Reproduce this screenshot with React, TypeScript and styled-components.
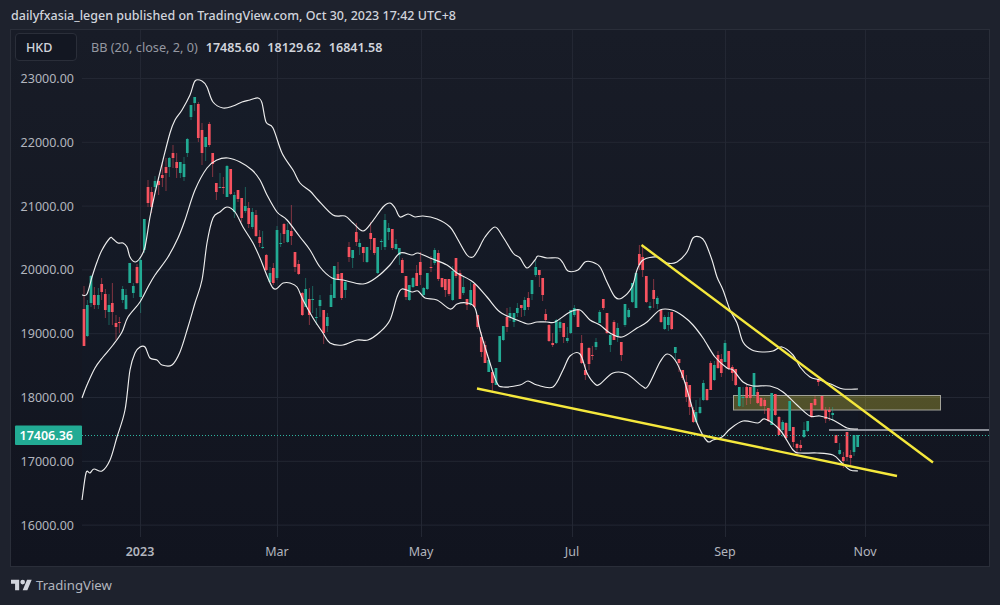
import styled, { createGlobalStyle } from 'styled-components';

const GlobalStyle = createGlobalStyle`
  html, body {
    margin: 0;
    background: #1e222d;
  }
  body {
    font-family: "Noto Sans", "Open Sans", sans-serif;
  }
`;

const Page = styled.div`
  width: 1000px;
  height: 605px;
  display: flex;
  flex-direction: column;
  padding: 0 10px;
  box-sizing: border-box;
  background: #1e222d;
  overflow: hidden;
`;

const Header = styled.div`
  height: 29px;
  flex: none;
  display: flex;
  align-items: center;
  padding: 2px 1px 0;
  box-sizing: border-box;
  font-size: 12.5px;
  font-weight: 500;
  color: #d1d4dc;
  white-space: nowrap;
`;

const ChartPanel = styled.div`
  position: relative;
  flex: none;
  height: 538px;
  box-sizing: border-box;
  border: 1px solid #2a2e39;
  background: linear-gradient(#181c27, #11141f);
`;

const ChartSvg = styled.svg`
  display: block;
`;

const Legend = styled.div`
  position: absolute;
  top: 3px;
  left: 4px;
  display: flex;
  align-items: center;
  gap: 14px;
`;

const SymbolBox = styled.div`
  width: 62px;
  height: 28px;
  box-sizing: border-box;
  display: flex;
  align-items: center;
  padding-left: 10px;
  border: 1px solid #2a2e39;
  border-radius: 4px;
  background: #131722;
  font-size: 12.5px;
  font-weight: 500;
  color: #d1d4dc;
`;

const Study = styled.div`
  display: flex;
  align-items: center;
  gap: 8px;
  font-size: 12.7px;
  color: #9598a1;
`;

const StudyValue = styled.span`
  font-size: 12.5px;
  font-weight: 600;
  color: #d1d4dc;
`;

const Footer = styled.div`
  flex: 1;
  display: flex;
  align-items: center;
  gap: 4px;
  padding: 0 1px 2px;
  font-size: 13.2px;
  color: #b2b5be;
`;

const Logo = styled.svg`
  width: 21px;
  height: 12px;
  fill: #d1d4dc;
`;

const PriceText = styled.text`
  font-size: 12.5px;
  fill: #b2b5be;
  text-anchor: end;
`;

const LastPriceText = styled.text`
  font-size: 12.5px;
  font-weight: 600;
  fill: #ffffff;
  text-anchor: end;
`;

const TimeText = styled.text<{ $bold?: boolean }>`
  font-size: 12.5px;
  font-weight: ${(p) => (p.$bold ? 600 : 400)};
  fill: #b2b5be;
  text-anchor: middle;
`;

type Point = [number, number];
// x, body top, body bottom, wick top, wick bottom, 1 = up candle
type Candle = [number, number, number, number, number, number];

const UP = '#22ab94';
const DOWN = '#f7525f';
const WEDGE = '#f5e83c';
const GRID = '#232733';
const BAND = '#eeeeee';

const upperBand: Point[] = [
  [82, 295], [87, 294], [92, 277], [97, 262], [102, 250], [110, 238], [113, 239], [118, 243], [123, 243], [127, 247],
  [130, 257], [135, 262], [140, 258], [145, 247], [150, 217], [155, 193], [163, 160], [170, 133], [175, 120], [182, 110],
  [190, 95], [195, 81], [202, 81], [207, 87], [213, 102], [223, 108], [233, 106], [242, 102], [250, 100], [258, 98],
  [262, 103], [266, 122], [273, 128], [282, 153], [293, 170], [300, 183], [310, 191], [318, 200], [333, 215], [345, 216],
  [353, 223], [363, 231], [372, 222], [383, 207], [390, 203], [395, 208], [400, 217], [408, 214], [415, 217], [423, 216],
  [437, 219], [450, 227], [457, 238], [467, 255], [473, 257], [478, 250], [485, 237], [495, 227], [503, 237], [513, 253],
  [520, 258], [527, 268], [535, 260], [538, 256], [547, 258], [558, 258], [563, 263], [568, 271], [578, 270], [585, 262],
  [592, 262], [600, 267], [607, 282], [615, 297], [622, 298], [632, 287], [637, 270], [643, 260], [657, 257], [667, 263],
  [677, 262], [687, 252], [693, 238], [700, 237], [705, 242], [712, 260], [717, 277], [723, 290], [730, 310], [737, 323],
  [743, 342], [752, 350], [763, 352], [773, 351], [782, 347], [793, 355], [800, 367], [810, 377], [820, 380], [833, 385],
  [843, 389], [858, 389],
];

const middleBand: Point[] = [
  [82, 398], [87, 385], [95, 368], [103, 357], [113, 345], [122, 332], [128, 317], [140, 302], [148, 287], [155, 275],
  [168, 257], [178, 238], [185, 220], [195, 190], [207, 168], [217, 160], [228, 158], [240, 162], [252, 170], [260, 180],
  [267, 195], [277, 212], [287, 220], [300, 237], [310, 250], [320, 267], [332, 278], [343, 280], [363, 284], [377, 277],
  [390, 265], [400, 253], [412, 255], [418, 253], [430, 258], [447, 265], [457, 273], [473, 282], [487, 297], [500, 312],
  [517, 320], [528, 324], [537, 322], [547, 322], [555, 322], [570, 312], [580, 310], [590, 320], [600, 325], [610, 333],
  [622, 337], [637, 328], [647, 322], [660, 310], [672, 310], [683, 316], [693, 325], [703, 338], [715, 357], [727, 368],
  [733, 370], [743, 382], [753, 386], [770, 386], [783, 392], [797, 405], [810, 416], [820, 416], [833, 420], [847, 428],
  [858, 429],
];

const lowerBand: Point[] = [
  [82, 500], [86, 473], [90, 473], [94, 469], [102, 471], [110, 460], [117, 437], [125, 410], [130, 370], [135, 353],
  [140, 347], [145, 347], [150, 358], [157, 360], [162, 365], [172, 365], [180, 352], [188, 327], [195, 303], [202, 280],
  [207, 243], [213, 218], [220, 212], [227, 207], [235, 212], [243, 227], [253, 243], [260, 258], [273, 288], [283, 283],
  [290, 283], [297, 287], [303, 300], [313, 318], [323, 333], [330, 343], [343, 345], [357, 340], [368, 340], [380, 332],
  [390, 320], [397, 297], [402, 289], [412, 292], [418, 291], [425, 298], [437, 300], [450, 309], [457, 304], [467, 303],
  [475, 308], [480, 330], [490, 363], [497, 383], [503, 387], [520, 385], [528, 381], [537, 385], [553, 387], [563, 370],
  [570, 356], [580, 354], [587, 373], [595, 384], [600, 384], [613, 373], [627, 374], [642, 386], [648, 386], [660, 362],
  [667, 354], [675, 360], [683, 377], [690, 400], [697, 423], [707, 441], [713, 440], [722, 437], [730, 429], [743, 421],
  [758, 423], [765, 419], [780, 430], [793, 450], [800, 453], [817, 453], [833, 455], [842, 463], [850, 470], [858, 471],
];

const candles: Candle[] = [
  [84, 309, 346, 286, 346, 0], [87.3, 305, 336, 300, 337, 1], [91, 276, 303, 275, 307, 1], [94.3, 295, 305, 287, 309, 0],
  [98.3, 295, 305, 288, 309, 1], [101.7, 284, 292, 278, 300, 0], [105.3, 294, 310, 289, 318, 0], [109, 305, 312, 294, 325, 1],
  [112.3, 303, 312, 283, 325, 0], [116, 323, 327, 315, 340, 0], [119.3, 322, 323, 317, 333, 0], [122.7, 289, 300, 286, 303, 1],
  [126, 295, 309, 289, 310, 1], [129.7, 263, 283, 263, 283, 1], [133.3, 286, 293, 283, 298, 1], [137, 267, 283, 264, 284, 0],
  [140.7, 260, 297, 258, 313, 1], [144.3, 219, 250, 219, 253, 1], [148, 187, 203, 180, 207, 0], [151.7, 192, 207, 187, 213, 0],
  [155, 181, 187, 176, 192, 1], [158.7, 181, 185, 177, 195, 0], [162.3, 175, 178, 162, 187, 0], [166, 167, 173, 158, 191, 0],
  [169.3, 158, 167, 157, 177, 1], [173, 153, 158, 145, 168, 0], [176.7, 162, 168, 153, 178, 0], [180.3, 162, 173, 162, 178, 1],
  [184, 164, 177, 157, 181, 1], [187.3, 139, 153, 138, 157, 1], [191, 105, 117, 105, 120, 1], [194.7, 97, 103, 97, 111, 1],
  [198.3, 104, 138, 102, 142, 0], [202, 130, 153, 123, 165, 0], [205.7, 137, 147, 137, 161, 1], [209.3, 124, 145, 122, 147, 0],
  [212.7, 153, 164, 153, 177, 0], [216.3, 183, 192, 183, 200, 0], [220, 187, 188, 173, 188, 1], [223.3, 187, 188, 177, 194, 0],
  [227, 166, 197, 165, 197, 1], [230.7, 169, 194, 169, 195, 0], [234.3, 195, 212, 192, 218, 1], [238, 190, 199, 190, 202, 0],
  [241.7, 198, 218, 198, 222, 0], [245.3, 206, 211, 187, 213, 1], [248.7, 208, 224, 202, 228, 0], [252.3, 212, 227, 208, 229, 1],
  [256, 215, 236, 210, 237, 0], [259.7, 237, 243, 230, 247, 0], [262.7, 247, 248, 231, 249, 1], [266.3, 255, 270, 254, 271, 0],
  [270, 273, 282, 267, 282, 1], [273.3, 268, 283, 263, 285, 0], [277, 230, 278, 226, 280, 1], [280.7, 243, 244, 233, 247, 1],
  [284, 224, 234, 223, 243, 0], [287.7, 230, 242, 223, 243, 1], [291.3, 231, 236, 205, 245, 0], [295, 252, 267, 252, 272, 0],
  [298.7, 264, 274, 260, 275, 0], [302.3, 293, 315, 292, 316, 0], [305.7, 289, 307, 278, 307, 1], [309.3, 299, 315, 288, 325, 0],
  [312.7, 299, 300, 286, 313, 1], [316.3, 317, 318, 308, 325, 1], [320, 300, 306, 295, 317, 1], [323.7, 310, 333, 310, 344, 0],
  [327.3, 317, 326, 313, 332, 1], [331, 295, 307, 284, 307, 1], [334.3, 266, 298, 266, 298, 1], [338, 274, 279, 262, 280, 0],
  [341.7, 273, 298, 273, 300, 0], [345.3, 282, 290, 280, 298, 1], [349, 247, 257, 242, 262, 0], [352.7, 250, 258, 250, 268, 1],
  [356.3, 232, 242, 223, 246, 0], [359.7, 243, 247, 239, 255, 1], [363.3, 247, 253, 247, 262, 0], [367, 247, 262, 247, 263, 1],
  [370.7, 233, 239, 222, 250, 0], [374.3, 238, 253, 238, 255, 0], [377.7, 247, 273, 247, 274, 1], [381.3, 241, 242, 239, 250, 1],
  [385, 220, 247, 214, 250, 1], [388.7, 228, 232, 223, 240, 1], [392.3, 229, 248, 229, 250, 0], [396, 244, 249, 239, 250, 1],
  [399.3, 248, 255, 248, 265, 1], [402.3, 260, 273, 258, 273, 0], [406, 276, 297, 276, 300, 0], [409.3, 285, 300, 285, 301, 1],
  [413, 278, 287, 277, 288, 1], [416.7, 273, 286, 265, 286, 0], [420.3, 262, 275, 252, 285, 0], [423.7, 288, 295, 287, 297, 1],
  [427.3, 273, 289, 273, 290, 1], [431, 267, 268, 256, 272, 0], [434.7, 250, 263, 248, 265, 1], [438.3, 253, 279, 250, 281, 0],
  [442, 278, 287, 278, 288, 0], [445.3, 279, 290, 279, 297, 0], [449, 279, 294, 279, 296, 0], [452.7, 271, 300, 266, 301, 1],
  [456, 258, 276, 258, 278, 0], [460, 273, 299, 270, 299, 0], [463.3, 287, 293, 277, 295, 1], [467, 299, 305, 299, 310, 0],
  [470.7, 290, 305, 282, 306, 1], [474.3, 284, 307, 284, 308, 0], [477.7, 315, 327, 315, 329, 0], [481.3, 337, 352, 332, 357, 0],
  [485, 345, 363, 341, 363, 0], [488.7, 360, 372, 357, 372, 1], [492.3, 372, 383, 372, 393, 0], [496, 368, 385, 368, 385, 1],
  [499.7, 336, 362, 336, 362, 1], [503.3, 326, 340, 326, 341, 1], [507, 317, 327, 308, 332, 0], [510, 313, 317, 307, 321, 1],
  [514, 313, 322, 313, 327, 1], [517.3, 308, 313, 303, 317, 1], [521.3, 305, 308, 305, 317, 0], [524.7, 300, 310, 297, 316, 1],
  [528.3, 298, 307, 292, 310, 0], [532, 280, 294, 280, 300, 1], [535.7, 267, 275, 261, 277, 1], [539.3, 270, 275, 270, 287, 0],
  [542.7, 278, 295, 278, 301, 0], [545.7, 314, 320, 309, 322, 0], [549, 325, 341, 324, 342, 0], [552.7, 343, 345, 333, 347, 0],
  [556.3, 320, 343, 319, 344, 1], [560, 322, 328, 319, 332, 1], [563.7, 323, 337, 323, 343, 0], [567.3, 338, 341, 327, 343, 1],
  [570.7, 310, 333, 310, 334, 1], [574.3, 308, 315, 305, 317, 1], [578, 310, 327, 310, 327, 0], [581.7, 343, 363, 335, 364, 0],
  [585.3, 370, 375, 364, 380, 0], [589, 348, 364, 347, 370, 0], [592.3, 355, 356, 346, 360, 0], [596, 342, 347, 338, 350, 1],
  [599.7, 312, 323, 310, 323, 1], [603.3, 299, 308, 299, 310, 0], [607, 313, 333, 313, 334, 0], [610.3, 335, 345, 333, 352, 1],
  [614, 322, 340, 320, 340, 0], [617.7, 328, 336, 323, 342, 1], [621.3, 342, 355, 342, 361, 0], [625, 304, 325, 304, 327, 1],
  [628.7, 310, 317, 308, 318, 1], [632.3, 283, 302, 283, 303, 1], [636, 273, 308, 273, 308, 1], [639.3, 254, 265, 245, 270, 0],
  [642.7, 257, 270, 247, 277, 0], [646.3, 276, 302, 276, 303, 0], [650, 306, 308, 302, 310, 1], [653.7, 290, 299, 279, 308, 0],
  [657.3, 298, 304, 296, 309, 1], [661, 310, 322, 310, 323, 0], [664.7, 317, 329, 315, 330, 1], [668.3, 317, 325, 312, 331, 1],
  [671.7, 312, 329, 312, 330, 0], [675.3, 347, 353, 347, 360, 1], [679, 359, 363, 359, 372, 0], [682.7, 370, 378, 370, 380, 0],
  [686.3, 382, 397, 375, 402, 0], [689.7, 385, 407, 385, 415, 0], [693.3, 410, 422, 407, 423, 0], [696, 412, 422, 400, 423, 1],
  [700, 407, 413, 398, 414, 1], [703.3, 383, 400, 380, 401, 1], [707, 389, 400, 389, 401, 0], [710.7, 363, 390, 361, 390, 0],
  [714.3, 365, 380, 361, 381, 1], [718, 355, 368, 351, 369, 0], [721.3, 359, 373, 354, 377, 0], [725, 343, 362, 340, 362, 1],
  [728.7, 351, 369, 351, 370, 0], [732.3, 367, 373, 365, 381, 0], [735.7, 369, 385, 369, 386, 0], [739.3, 387, 406, 387, 407, 1],
  [743, 397, 398, 387, 407, 1], [746.7, 387, 398, 385, 405, 0], [750.3, 387, 398, 387, 404, 0], [754, 373, 395, 373, 398, 1],
  [757.7, 392, 403, 389, 404, 0], [761, 398, 406, 397, 407, 0], [764.7, 400, 406, 398, 414, 0], [768.3, 408, 421, 408, 422, 0],
  [771.7, 393, 425, 393, 425, 1], [775.3, 394, 415, 394, 416, 0], [779, 417, 435, 416, 435, 0], [782.7, 422, 430, 420, 437, 1],
  [786, 423, 438, 422, 440, 0], [789.7, 401, 431, 401, 431, 1], [793.3, 427, 442, 427, 447, 0], [797, 444, 448, 443, 455, 0],
  [800.7, 445, 448, 440, 451, 0], [804, 430, 437, 422, 438, 1], [807.7, 421, 431, 421, 432, 1], [811.3, 403, 417, 403, 418, 0],
  [815, 399, 405, 396, 406, 0], [818.3, 379, 382, 378, 386, 0], [822, 396, 410, 396, 411, 0], [825.7, 410, 419, 407, 423, 0],
  [829.3, 410, 412, 407, 421, 0], [832.7, 413, 415, 407, 421, 1], [836, 435, 443, 435, 443, 0], [839.7, 450, 454, 443, 455, 1],
  [843.3, 457, 461, 452, 468, 0], [847, 432, 457, 432, 461, 0], [850.7, 455, 458, 450, 466, 0], [854, 435, 452, 435, 456, 1],
  [857.7, 435, 447, 435, 447, 1],
];

const prices = [23000, 22000, 21000, 20000, 19000, 18000, 17000, 16000];
const months: [string, number][] = [['2023', 140], ['Mar', 277], ['May', 421], ['Jul', 572], ['Sep', 725], ['Nov', 865]];

const priceY = (price: number) => 78.5 + ((23000 - price) / 1000) * 63.8;

// catmull-rom through the traced points
function smooth(points: Point[]) {
  let d = `M${points[0][0]} ${points[0][1]}`;
  for (let i = 0; i < points.length - 1; i++) {
    const p0 = points[Math.max(i - 1, 0)];
    const p1 = points[i];
    const p2 = points[i + 1];
    const p3 = points[Math.min(i + 2, points.length - 1)];
    const c1x = p1[0] + (p2[0] - p0[0]) / 6;
    const c1y = p1[1] + (p2[1] - p0[1]) / 6;
    const c2x = p2[0] - (p3[0] - p1[0]) / 6;
    const c2y = p2[1] - (p3[1] - p1[1]) / 6;
    d += `C${c1x.toFixed(1)} ${c1y.toFixed(1)} ${c2x.toFixed(1)} ${c2y.toFixed(1)} ${p2[0]} ${p2[1]}`;
  }
  return d;
}

function Chart() {
  const fill = `${smooth(upperBand)}L${lowerBand[lowerBand.length - 1].join(' ')}${smooth([...lowerBand].reverse()).replace('M', 'L')}Z`;

  return (
    <ChartSvg viewBox="11 30 978 536" width={978} height={536}>
      {prices.map((price) => (
        <line key={price} x1={82} x2={989} y1={priceY(price)} y2={priceY(price)} stroke={GRID} />
      ))}
      {months.map(([label, x]) => (
        <line key={label} x1={x + 0.5} x2={x + 0.5} y1={30} y2={537} stroke={GRID} />
      ))}
      <path d={fill} fill="#2196f3" fillOpacity={0.012} />

      <rect x={733.5} y={395.5} width={207} height={14.5} fill={WEDGE} fillOpacity={0.28} stroke="#a3a399" strokeWidth={1} />

      {candles.map(([x, top, bottom, wickTop, wickBottom, up]) => (
        <g key={x} fill={up ? UP : DOWN}>
          <rect x={x - 0.4} y={wickTop} width={0.8} height={wickBottom - wickTop} fillOpacity={0.6} />
          <rect x={x - 1.35} y={top} width={2.7} height={Math.max(bottom - top, 1)} />
        </g>
      ))}

      <line x1={829} x2={989} y1={430} y2={430} stroke="#8a8d96" strokeWidth={2} />
      <line x1={82} x2={989} y1={435.5} y2={435.5} stroke="#2fb5a0" strokeWidth={1} strokeDasharray="1 2" />

      <path d={smooth(upperBand)} fill="none" stroke={BAND} strokeWidth={1.15} />
      <path d={smooth(middleBand)} fill="none" stroke={BAND} strokeWidth={1.15} />
      <path d={smooth(lowerBand)} fill="none" stroke={BAND} strokeWidth={1.15} />

      <line x1={477} y1={388.5} x2={897} y2={476} stroke={WEDGE} strokeWidth={2.4} />
      <line x1={641.5} y1={245} x2={933} y2={462.5} stroke={WEDGE} strokeWidth={2.4} />

      {prices.map((price) => (
        <PriceText key={price} x={74} y={priceY(price) + 4.5}>
          {price.toFixed(2)}
        </PriceText>
      ))}
      <rect x={15} y={425.5} width={67} height={19.5} rx={1} fill={UP} />
      <LastPriceText x={73} y={440}>17406.36</LastPriceText>
      {months.map(([label, x], i) => (
        <TimeText key={label} x={x} y={556} $bold={i === 0}>
          {label}
        </TimeText>
      ))}
    </ChartSvg>
  );
}

export default function App() {
  return (
    <Page>
      <GlobalStyle />
      <Header>dailyfxasia_legen published on TradingView.com, Oct 30, 2023 17:42 UTC+8</Header>
      <ChartPanel>
        <Chart />
        <Legend>
          <SymbolBox>HKD</SymbolBox>
          <Study>
            BB (20, close, 2, 0)
            <StudyValue>17485.60</StudyValue>
            <StudyValue>18129.62</StudyValue>
            <StudyValue>16841.58</StudyValue>
          </Study>
        </Legend>
      </ChartPanel>
      <Footer>
        <Logo viewBox="0 4 36 18">
          <path d="M14 22H7V11H0V4h14v18zM28 22h-8l7.5-18h8L28 22z" />
          <circle cx="20" cy="8" r="4" />
        </Logo>
        TradingView
      </Footer>
    </Page>
  );
}
